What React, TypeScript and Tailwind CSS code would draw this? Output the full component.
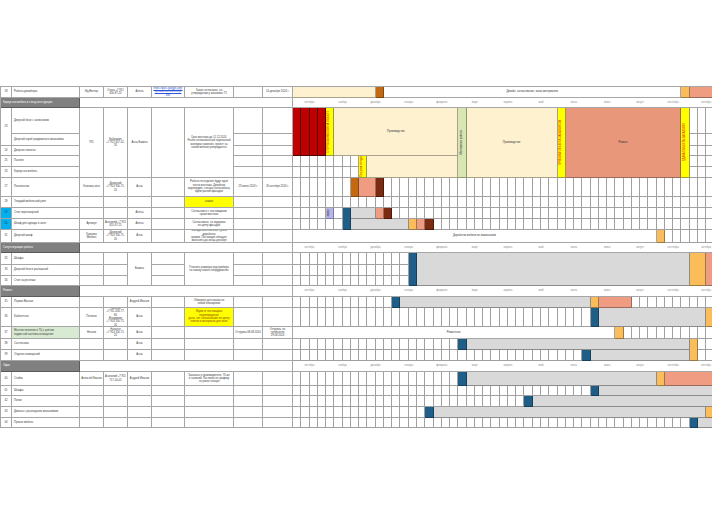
import React from 'react';

type Cell = {
  r: number;
  c: number;
  rs?: number;
  cs?: number;
  cls?: string;
  t?: React.ReactNode;
};

// kind: g = empty week cells, x = covered by a merge from above, anything else = tone key
type Seg = [number, string, string?, number?, boolean?];

const W = 10; // first week column in the grid

const base = 'border-r border-b border-[#a6a6a6] flex items-center justify-center text-center overflow-hidden';
const weekCell = 'border-r border-b border-[#a0a0a0]';
const bar = 'border-r border-b flex items-center justify-center text-center overflow-hidden';

const tone: Record<string, string> = {
  beige: 'bg-[#fdf1cf] border-[#a8a28a]',
  brown: 'bg-[#c4690f] border-[#7d4a1a]',
  dark: 'bg-[#7a2b11] border-[#4a1a0a]',
  orange: 'bg-[#fbbd5a] border-[#9a7a40]',
  salmon: 'bg-[#ef9c82] border-[#9a6a5a]',
  rep: 'bg-[#e9977b] border-[#9a6a5a]',
  red: 'bg-[#c00000] border-[#4d0000]',
  yellow: 'bg-[#ffff00] border-[#9a9a40]',
  green: 'bg-[#d9e5b3] border-[#8a9a6a]',
  blue: 'bg-[#1e5e87] border-[#14405c]',
  gray: 'bg-[#d9d9d9] border-[#8c8c8c]',
  lav: 'bg-[#b8b5e8] border-[#7c78b0]',
  white: 'bg-white border-[#a6a6a6]',
};

const months = [
  'октябрь', 'ноябрь', 'декабрь', 'январь', 'февраль', 'март', 'апрель',
  'май', 'июнь', 'июль', 'август', 'сентябрь', 'октябрь',
];

function gantt(r: number, segs: Seg[]): Cell[] {
  const out: Cell[] = [];
  let w = 0;
  for (const [n, kind, text, rs, vert] of segs) {
    if (kind === 'g') {
      for (let i = 0; i < n; i++) out.push({ r, c: W + w + i, cls: weekCell });
    } else if (kind !== 'x') {
      const textCls = kind === 'yellow' ? 'text-[#e00000]' : kind === 'blue' ? 'text-white' : 'text-[#333]';
      out.push({
        r,
        c: W + w,
        cs: n,
        rs,
        cls: `${bar} ${tone[kind]}`,
        t: text ? (
          <span className={vert ? `[writing-mode:vertical-rl] rotate-180 leading-[2.8px] ${textCls}` : textCls}>{text}</span>
        ) : undefined,
      });
    }
    w += n;
  }
  return out;
}

function monthRow(r: number): Cell[] {
  return months.map((m, i) => ({
    r,
    c: W + i * 4,
    cs: 4,
    cls: 'border-b border-[#a6a6a6] flex items-center justify-center text-[#8a8a8a]',
    t: m,
  }));
}

const t = (r: number, c: number, text = '', extra = '', rs?: number): Cell => ({
  r,
  c,
  rs,
  cls: `${base} whitespace-pre-line px-[1px] ${extra}`,
  t: text,
});
const num = (r: number, text: string, extra = '', rs?: number): Cell => t(r, 1, text, extra, rs);
const name = (r: number, text: string, extra = ''): Cell => ({
  r,
  c: 2,
  cls: `${base} !justify-start !text-left whitespace-pre-line pl-[2px] ${extra}`,
  t: text,
});
const section = (r: number, text: string): Cell[] => [
  {
    r,
    c: 1,
    cs: 2,
    cls: 'border-r border-b border-[#5a5a5a] bg-[#808080] text-white flex items-center pl-[2px]',
    t: text,
  },
  { r, c: 3, cs: 7, cls: 'border-r border-b border-[#a6a6a6] bg-white' },
];
const emptyRow = (r: number, cols: number[]): Cell[] => cols.map((c) => t(r, c));

const tableCells: Cell[] = [
  // 18
  num(1, '18'),
  name(1, 'Работы дизайнера'),
  t(1, 3, 'Ид Вектор'),
  t(1, 4, 'Ольга +7 911\n456-87-20'),
  t(1, 5, 'Алёна'),
  t(1, 6, 'https://docs.google.com/\nspreadsheets/d/1xVq8\nedit', 'text-[#2f56d6] underline'),
  t(1, 7, 'Заказ согласован, на\nутверждении у заказчика ТЗ'),
  t(1, 8),
  t(1, 9, '14 декабря 2024 г.'),

  ...section(2, 'Корпусная мебель и стенд конструкция'),
  num(3, '23', '', 2),
  name(3, 'Дверной блок с наличником'),
  name(4, 'Дверной короб раздвижного механизма'),
  num(5, '24'),
  name(5, 'Дверное полотно'),
  num(6, '25'),
  name(6, 'Панели'),
  num(7, '26'),
  name(7, 'Корпусная мебель'),
  t(3, 3, 'ТКС', '', 5),
  t(3, 4, 'Бабушкин\n+7 921 657-02-35', '', 5),
  t(3, 5, 'Анна Бавина', '', 5),
  t(3, 6, '', '', 5),
  t(3, 7, 'Срок монтажа до 11.12.2024.\nРанее согласованный отделочный\nматериал заменён, проект на\nновой мебели утверждается', '', 5),
  ...[3, 4, 5, 6, 7].flatMap((r) => emptyRow(r, [8, 9])),

  num(8, '27'),
  name(8, 'Потолочные'),
  t(8, 3, 'Клиника чего'),
  t(8, 4, 'Дочерний\n+7 924 350-71-20'),
  t(8, 5, 'Анна'),
  t(8, 6),
  t(8, 7, 'Работы по отделке будут идти\nпосле монтажа. Дизайнер\nподтвердил, стенды согласованы,\nждём распил фасадов'),
  t(8, 8, '23 июля 2024 г.'),
  t(8, 9, '30 октября 2024 г.'),

  num(9, '28'),
  name(9, 'Текущий мебельный узел'),
  ...emptyRow(9, [3, 4, 5, 6]),
  t(9, 7, 'сказал', 'bg-[#ffff00]'),
  ...emptyRow(9, [8, 9]),

  num(10, '29', 'bg-[#00b0f0]'),
  name(10, 'Стол переговорный'),
  ...emptyRow(10, [3, 4]),
  t(10, 5, 'Алёна'),
  t(10, 6),
  t(10, 7, 'Согласовать с поставщиком\nсроки монтажа'),
  ...emptyRow(10, [8, 9]),

  num(11, '30', 'bg-[#00b0f0]'),
  name(11, 'Шкаф для одежды в холл'),
  t(11, 3, 'Артикул'),
  t(11, 4, 'Анатолий +7 921\n455-67-25'),
  t(11, 5, 'Алёна'),
  t(11, 6),
  t(11, 7, 'Согласовано, но задержка\nпо цвету фасадов'),
  ...emptyRow(11, [8, 9]),

  num(12, '31'),
  name(12, 'Дверной шкаф'),
  t(12, 3, 'Клиника\nМебель'),
  t(12, 4, 'Дочерний\n+7 924 350-71-20'),
  t(12, 5, 'Анна'),
  t(12, 6),
  t(12, 7, 'Фасады изготовлены, нужна доработка\nкромки. Поставщик обещает\nзакончить до конца декабря'),
  ...emptyRow(12, [8, 9]),

  ...section(13, 'Сопутствующие работы'),
  num(14, '32'),
  name(14, 'Шкафы'),
  num(15, '33'),
  name(15, 'Дверной блок в распашной'),
  num(16, '34'),
  name(16, 'Стол на ресепшн'),
  t(14, 5, 'Бавина', '', 3),
  t(14, 7, 'Уточнить размеры под приборы\nпо заказу нового оборудования', '', 3),
  ...[14, 15, 16].flatMap((r) => emptyRow(r, [3, 4, 6, 8, 9])),

  ...section(17, 'Ремонт'),
  num(18, '35'),
  name(18, 'Первая Ванная'),
  ...emptyRow(18, [3, 4]),
  t(18, 5, 'Андрей Иванов'),
  t(18, 6),
  t(18, 7, 'Обмерить для заказа по\nновой планировке'),
  ...emptyRow(18, [8, 9]),

  num(19, '36'),
  name(19, 'Кабинетная'),
  t(19, 3, 'Потолок'),
  t(19, 4, 'Николай\n+7 911 456-77-80\nВладимир\n+7 924 350-71-20'),
  t(19, 5, 'Анна'),
  t(19, 6),
  t(19, 7, 'Ждём от поставщика подтверждения\nдаты, нет согласования по цвету\nплитки и материала для пола', 'bg-[#ffff00] text-[#8a3a00]'),
  ...emptyRow(19, [8, 9]),

  num(20, '37'),
  name(20, 'Монтаж потолков в ТЦ с учётом\nподвесной системы освещения', 'bg-[#d9ead3]'),
  t(20, 3, 'Натали'),
  t(20, 4, 'Наталья\n+7 924 350-71-20'),
  t(20, 5, 'Анна'),
  ...emptyRow(20, [6, 7]),
  t(20, 8, 'Отгрузка 08.08.2024'),
  t(20, 9, 'Отгрузка, по готовности\n29.08.2024'),

  num(21, '38'),
  name(21, 'Сантехника'),
  ...emptyRow(21, [3, 4]),
  t(21, 5, 'Анна'),
  ...emptyRow(21, [6, 7, 8, 9]),

  num(22, '39'),
  name(22, 'Отделка помещений'),
  ...emptyRow(22, [3, 4]),
  t(22, 5, 'Анна'),
  ...emptyRow(22, [6, 7, 8, 9]),

  ...section(23, 'Офис'),
  num(24, '40'),
  name(24, 'Стойка'),
  t(24, 3, 'Алексей Иванов'),
  t(24, 4, 'Анатолий +7 911\n717-00-02'),
  t(24, 5, 'Андрей Иванов'),
  t(24, 6),
  t(24, 7, 'Заказано у производителя, 70 шт\nв наличии. Поставка по графику\nне ранее января'),
  ...emptyRow(24, [8, 9]),

  num(25, '41'),
  name(25, 'Шкафы'),
  num(26, '42'),
  name(26, 'Полки'),
  num(27, '43'),
  name(27, 'Диваны с раскладным механизмом'),
  num(28, '44'),
  name(28, 'Прочая мебель'),
  ...[25, 26, 27, 28].flatMap((r) => emptyRow(r, [3, 4, 5, 6, 7, 8, 9])),
];

const ganttCells: Cell[] = [
  ...gantt(1, [[10, 'beige'], [1, 'brown'], [36, 'white', 'Дизайн, согласование, заказ материалов'], [1, 'orange'], [4, 'salmon']]),
  ...monthRow(2),
  ...gantt(3, [
    [1, 'red', '', 3], [1, 'red', '', 3], [1, 'red', '', 3], [1, 'red', '', 3],
    [1, 'yellow', 'ОТГРУЗКА МЕБЕЛИ НА ОБЪЕКТ', 3, true],
    [15, 'beige', 'Производство', 3],
    [1, 'green', 'Монтажные работы', 5, true],
    [11, 'beige', 'Производство', 5],
    [1, 'yellow', 'ПРИЁМКА ОБЪЕКТА ЗАКАЗЧИКОМ', 5, true],
    [14, 'rep', 'Ремонт', 5],
    [1, 'yellow', 'СДАЧА ОБЪЕКТА ЗАКАЗЧИКУ', 5, true],
    [4, 'g'],
  ]),
  ...gantt(4, [[48, 'x'], [4, 'g']]),
  ...gantt(5, [[48, 'x'], [4, 'g']]),
  ...gantt(6, [[8, 'g'], [1, 'yellow', 'Отгрузка стенды', 2, true], [11, 'beige', '', 2], [28, 'x'], [4, 'g']]),
  ...gantt(7, [[8, 'g'], [40, 'x'], [4, 'g']]),
  ...gantt(8, [[7, 'g'], [1, 'brown'], [2, 'salmon'], [1, 'dark'], [41, 'g']]),
  ...gantt(9, [[52, 'g']]),
  ...gantt(10, [[4, 'g'], [1, 'lav', 'замер', undefined, true], [1, 'g'], [1, 'blue', '', 2], [3, 'gray'], [1, 'salmon'], [1, 'dark'], [40, 'g']]),
  ...gantt(11, [[6, 'g'], [1, 'x'], [7, 'gray'], [1, 'orange'], [1, 'salmon'], [1, 'dark'], [35, 'g']]),
  ...gantt(12, [[44, 'white', 'Доработки мебели по замечаниям'], [1, 'orange'], [7, 'g']]),
  ...monthRow(13),
  ...gantt(14, [[14, 'g'], [1, 'blue', '', 3], [33, 'gray', '', 3], [2, 'orange', '', 3], [2, 'salmon', '', 3]]),
  ...gantt(15, [[14, 'g'], [38, 'x']]),
  ...gantt(16, [[14, 'g'], [38, 'x']]),
  ...monthRow(17),
  ...gantt(18, [[12, 'g'], [1, 'blue'], [23, 'gray'], [1, 'orange'], [4, 'salmon'], [11, 'g']]),
  ...gantt(19, [[36, 'g'], [1, 'blue'], [13, 'gray'], [2, 'orange']]),
  ...gantt(20, [[39, 'white', 'Ремонтная'], [1, 'orange'], [12, 'g']]),
  ...gantt(21, [[20, 'g'], [1, 'blue'], [27, 'gray'], [1, 'orange', '', 2], [3, 'g']]),
  ...gantt(22, [[35, 'g'], [1, 'blue'], [12, 'gray'], [1, 'x'], [3, 'g']]),
  ...monthRow(23),
  ...gantt(24, [[20, 'g'], [1, 'blue'], [23, 'gray'], [1, 'orange'], [7, 'salmon']]),
  ...gantt(25, [[36, 'g'], [1, 'blue'], [15, 'gray']]),
  ...gantt(26, [[28, 'g'], [1, 'blue'], [23, 'gray']]),
  ...gantt(27, [[16, 'g'], [1, 'blue'], [33, 'gray'], [2, 'orange']]),
  ...gantt(28, [[48, 'g'], [1, 'blue'], [3, 'gray']]),
];

export default function App() {
  const cells = [...tableCells, ...ganttCells];
  return (
    <div className="w-[712px] h-[516px] overflow-hidden bg-white pt-[86px] font-['Liberation_Sans',Arial,sans-serif] text-[2.7px] leading-[3.3px] text-[#3a3a3a]">
      <div className="grid w-max border-t border-l border-[#a6a6a6] grid-cols-[11px_68px_24px_24px_24px_33px_49px_29px_30px_repeat(52,8.27px)] grid-rows-[11px_10px_26px_12px_10px_11px_11px_19px_11px_11px_11px_13px_10px_12px_11px_10px_11px_11px_19px_12px_11px_11px_11px_14px_10px_11px_11px_10px]">
        {cells.map((cell, i) => (
          <div
            key={i}
            className={cell.cls}
            style={{
              gridRow: `${cell.r} / span ${cell.rs ?? 1}`,
              gridColumn: `${cell.c} / span ${cell.cs ?? 1}`,
            }}
          >
            {cell.t}
          </div>
        ))}
      </div>
    </div>
  );
}
